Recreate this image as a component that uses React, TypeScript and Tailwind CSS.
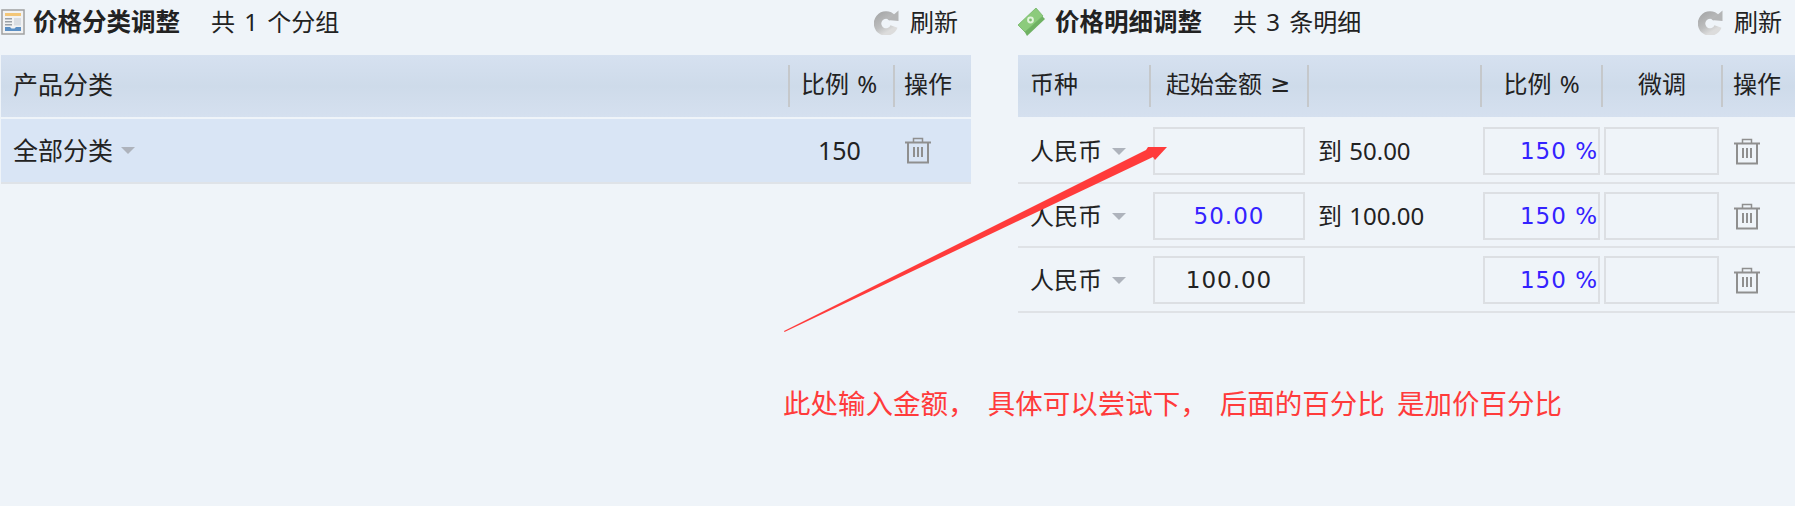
import React from "react";

const cjk = "font-['Noto_Sans','Noto_Sans_CJK_SC',sans-serif]";
const field = "font-['DejaVu_Sans','Noto_Sans_CJK_SC',sans-serif] text-[23px] tracking-[1px]";

function TableIcon() {
  return (
    <svg width="24" height="26" viewBox="0 0 24 26" className="shrink-0">
      <rect x="1" y="1" width="22" height="24" fill="#f1f2f3" stroke="#a0a0a0" strokeWidth="1.5" />
      <rect x="4" y="4" width="16" height="3" fill="#f3c677" />
      <rect x="4" y="9" width="7" height="1.5" fill="#9aa0a6" />
      <rect x="4" y="12" width="7" height="1.5" fill="#9aa0a6" />
      <rect x="4" y="15" width="7" height="1.5" fill="#9aa0a6" />
      <rect x="13" y="9" width="7" height="7.5" fill="#d9dde2" />
      <path d="M4 18h5l1.500 1.500h3L15 18h5v4H4z" fill="#5b8fc4" />
    </svg>
  );
}

function MoneyIcon() {
  return (
    <svg width="28" height="28" viewBox="0 0 28 28" className="shrink-0">
      <path d="M5 21 22 6l5 5L9 28z" fill="#6fb163" />
      <path d="M0 17 18 0l7 8L7 24z" fill="#8ccb7c" stroke="#74b567" strokeWidth="0.8" />
      <circle cx="12.500" cy="12" r="3.400" fill="#e2f4dc" />
      <circle cx="12.500" cy="12" r="1.400" fill="#7cba6d" />
    </svg>
  );
}

function RefreshIcon() {
  return (
    <svg width="25" height="25" viewBox="0 0 25 25" className="shrink-0">
      <defs>
        <linearGradient id="refreshGrey" x1="0" y1="0" x2="0.6" y2="1">
          <stop offset="0" stopColor="#a9aaab" />
          <stop offset="0.6" stopColor="#bdbebf" />
          <stop offset="1" stopColor="#dcdcdc" />
        </linearGradient>
      </defs>
      <path
        d="M18.500 8A8.500 8.500 0 1 0 20 16.500"
        fill="none"
        stroke="url(#refreshGrey)"
        strokeWidth="7.500"
      />
      <path d="M13.500 10 24.500 0.500v10.500z" fill="#b4b5b6" />
    </svg>
  );
}

function TrashIcon() {
  return (
    <svg width="26" height="27" viewBox="0 0 26 27" className="shrink-0" fill="none" stroke="#8f8f8f">
      <path d="M8.500 5V1.500h9V5" strokeWidth="1.500" />
      <path d="M0 5.500h26" strokeWidth="2" />
      <path d="M3 5.500v20h20v-20" strokeWidth="2" />
      <path d="M9 10v10M13 10v10M17 10v10" strokeWidth="2" />
    </svg>
  );
}

function Caret() {
  return (
    <span className="h-0 w-0 border-x-[7px] border-t-[7px] border-x-transparent border-t-[#aeb3bc]" />
  );
}

function PanelTitle({ icon, title, count, titleGap }: { icon: React.ReactNode; title: string; count: string; titleGap: string }) {
  return (
    <div className="flex h-[55px] items-center pb-[11px]">
      {icon}
      <span className={`text-[24.5px] font-bold ${titleGap}`}>{title}</span>
      <span className="ml-[31px] [word-spacing:3px]">{count}</span>
      <span className="ml-auto flex items-center">
        <RefreshIcon />
        <span className="ml-[11px] mr-[13px]">刷新</span>
      </span>
    </div>
  );
}

function HeaderCell({ children, className = "" }: { children?: React.ReactNode; className?: string }) {
  return (
    <div className={`flex h-[42px] items-center border-[#c5c8cb] pb-[4px] ${className}`}>{children}</div>
  );
}

const headerBg = "bg-gradient-to-b from-[#d6e1f0] via-[#cedbea] to-[#d5e0ef]";
const detailCols = "grid grid-cols-[133px_158px_173px_121px_120px_72px]";

const detailRows = [
  { from: "", fromColor: "text-[#222]", to: "到 50.00", height: "h-[67px]", pad: "pt-[10px]" },
  { from: "50.00", fromColor: "text-[#3322ff]", to: "到 100.00", height: "h-[64px]", pad: "pt-[8px]" },
  { from: "100.00", fromColor: "text-[#222]", to: "", height: "h-[65px]", pad: "pt-[8px]" },
];

export default function App() {
  return (
    <div className={`relative flex h-[506px] overflow-hidden bg-[#eff4f9] pl-px text-[24px] leading-none text-[#222] ${cjk}`}>
      {/* 价格分类调整 */}
      <div className="w-[970px]">
        <PanelTitle
          icon={<TableIcon />}
          title="价格分类调整"
          count="共 1 个分组"
          titleGap="ml-[8px]"
        />
        <div className={`flex h-[62px] items-center ${headerBg}`}>
          <div className="flex-1 pb-[4px] pl-3 text-[25px]">产品分类</div>
          <HeaderCell className="w-[105px] border-l-2 pl-[11px] [word-spacing:2px]">比例 %</HeaderCell>
          <HeaderCell className="w-[78px] border-l-2 pl-[9px]">操作</HeaderCell>
        </div>
        <div className="mt-[2px] flex h-[65px] items-center border-b-2 border-[#dfe3e8] bg-[#d9e5f5]">
          <div className="flex flex-1 items-center gap-2 pl-3 text-[25px]">
            全部分类
            <Caret />
          </div>
          <div className="w-[105px] pl-[30px] text-[25px]">150</div>
          <div className="w-[78px] pl-[12px]">
            <TrashIcon />
          </div>
        </div>
      </div>

      {/* 价格明细调整 */}
      <div className="ml-[47px] w-[777px]">
        <PanelTitle
          icon={<MoneyIcon />}
          title="价格明细调整"
          count="共 3 条明细"
          titleGap="ml-[9px]"
        />
        <div className={`${detailCols} h-[62px] items-center ${headerBg}`}>
          <HeaderCell className="border-r-2 pl-3">币种</HeaderCell>
          <HeaderCell className="border-r-2 pl-[15px]">
            起始金额
            <span className="ml-2 font-['DejaVu_Sans']">≥</span>
          </HeaderCell>
          <HeaderCell className="border-r-2" />
          <HeaderCell className="justify-center border-r-2 [word-spacing:2px]">比例 %</HeaderCell>
          <HeaderCell className="justify-center border-r-2">微调</HeaderCell>
          <div className="pb-[4px] pl-[10px]">操作</div>
        </div>
        {detailRows.map((row, index) => (
          <div key={index} className={`${detailCols} ${row.height} ${row.pad} items-start border-b-2 border-[#dfe2e6]`}>
            <div className="flex h-[48px] items-center gap-[10px] pl-3">
              人民币
              <Caret />
            </div>
            <div className="pl-[2px]">
              <div className={`flex h-[48px] w-[152px] items-center justify-center border-2 border-[#dcdfe3] ${field} ${row.fromColor}`}>
                {row.from}
              </div>
            </div>
            <div className="flex h-[48px] items-center pl-[9px] [word-spacing:1px]">{row.to}</div>
            <div className="pl-px">
              <div className={`flex h-[48px] w-[117px] items-center justify-end border-2 border-[#dcdfe3] text-[#3322ff] ${field}`}>
                150 %
              </div>
            </div>
            <div className="pl-[1px]">
              <div className="h-[48px] w-[115px] border-2 border-[#dcdfe3]" />
            </div>
            <div className="flex h-[48px] items-center pl-[11px]">
              <TrashIcon />
            </div>
          </div>
        ))}
      </div>

      {/* 截图批注 */}
      <svg className="absolute left-0 top-0" width="1795" height="506" viewBox="0 0 1795 506">
        <path
          d="M784 331 1146 150 1148 147 1167 147 1155 160 1153 157 784.500 332z"
          fill="#ff3b3b"
        />
      </svg>
      <div className="absolute left-[783px] top-[390px] whitespace-pre text-[27.5px] leading-[28px] text-[#ff3b3b] [word-spacing:5px]">
        此处输入金额， 具体可以尝试下， 后面的百分比 是加价百分比
      </div>
    </div>
  );
}
